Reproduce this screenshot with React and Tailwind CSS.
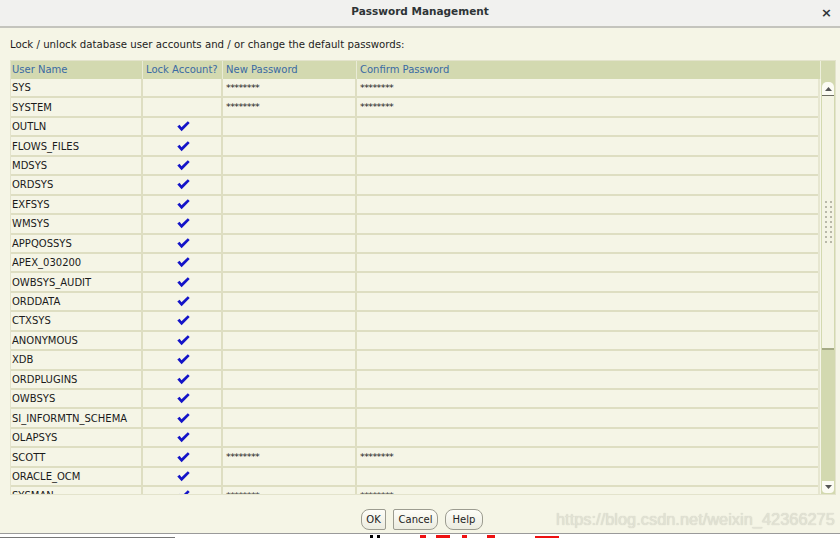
import React from "react";

// ─────────────────────────────────────────────
// DATA
// ─────────────────────────────────────────────
const PW = "********";
const rows = [
  { name: "SYS", lock: false, pw: true },
  { name: "SYSTEM", lock: false, pw: true },
  { name: "OUTLN", lock: true },
  { name: "FLOWS_FILES", lock: true },
  { name: "MDSYS", lock: true },
  { name: "ORDSYS", lock: true },
  { name: "EXFSYS", lock: true },
  { name: "WMSYS", lock: true },
  { name: "APPQOSSYS", lock: true },
  { name: "APEX_030200", lock: true },
  { name: "OWBSYS_AUDIT", lock: true },
  { name: "ORDDATA", lock: true },
  { name: "CTXSYS", lock: true },
  { name: "ANONYMOUS", lock: true },
  { name: "XDB", lock: true },
  { name: "ORDPLUGINS", lock: true },
  { name: "OWBSYS", lock: true },
  { name: "SI_INFORMTN_SCHEMA", lock: true },
  { name: "OLAPSYS", lock: true },
  { name: "SCOTT", lock: true, pw: true },
  { name: "ORACLE_OCM", lock: true },
  { name: "SYSMAN", lock: true, pw: true },
];

function Check() {
  return (
    <svg width="13" height="11" viewBox="0 0 13 11">
      <path d="M0.3 5.6 L2.6 3.8 L4.5 6.3 L10.8 0.3 L12.7 1.9 L4.6 10.2 Z" fill="#1414c8" />
    </svg>
  );
}

function Btn({ children, className = "" }) {
  return (
    <button
      className={`h-[21px] rounded-[8px] border border-[#9c9c90] bg-gradient-to-b from-[#fdfdf8] to-[#ecece0]
        text-[10px] text-[#222] leading-none ${className}`}
    >
      {children}
    </button>
  );
}

// ─────────────────────────────────────────────
// APP
// ─────────────────────────────────────────────
export default function App() {
  return (
    <div
      className="w-[840px] h-[538px] overflow-hidden flex flex-col bg-[#f5f5e6] text-[#1c1c1c]"
      style={{ fontFamily: '"DejaVu Sans", sans-serif' }}
    >
      {/* Title bar */}
      <div className="h-[28px] shrink-0 flex items-center bg-[#f1f1ef] border-b-2 border-[#c4c4bd] relative">
        <div className="flex-1 text-center text-[10.5px] font-bold text-[#2e3436] pb-[3px]">
          Password Management
        </div>
        <div className="absolute right-[8px] top-[3px] text-[13px] font-bold text-[#2e3436]">×</div>
      </div>

      {/* Body */}
      <div className="flex-1 flex flex-col px-[10px]">
        <div className="pt-[10px] h-[24px] text-[10.2px] leading-[14px] text-[#1c1c1c]">
          Lock / unlock database user accounts and / or change the default passwords:
        </div>

        {/* Table */}
        <div className="mt-[8px] w-[826px] h-[435px] border border-[#e3e3cc] flex flex-col">
          {/* Header */}
          <div className="h-[18px] shrink-0 flex bg-[#d3d9b0] text-[10px] text-[#3a6aa3]">
            <div className="flex-1 grid grid-cols-[132px_80px_134px_1fr]">
              <div className="pl-[1px] leading-[18px] border-r border-[#e9ebd6]">User Name</div>
              <div className="pl-[3px] leading-[18px] border-r border-[#e9ebd6]">Lock Account?</div>
              <div className="pl-[3px] leading-[18px] border-r border-[#e9ebd6]">New Password</div>
              <div className="pl-[3px] leading-[18px]">Confirm Password</div>
            </div>
            <div className="w-[15px] border-l border-[#eef0dd]" />
          </div>

          {/* Rows + scrollbar */}
          <div className="flex-1 flex min-h-0">
            <div className="flex-1 overflow-hidden border-r-2 border-[#e6e6d0]">
              {rows.map((r) => (
                <div
                  key={r.name}
                  className="h-[19.45px] grid grid-cols-[132px_80px_134px_1fr] border-b-2 border-[#dedec2] text-[10px]"
                >
                  <div className="pl-[1px] flex items-center border-r-2 border-[#dedec2] text-[#1a1a1a]">
                    {r.name}
                  </div>
                  <div className="flex items-center justify-center pl-[2px] border-r-2 border-[#dedec2]">
                    {r.lock && <Check />}
                  </div>
                  <div className="pl-[3px] flex items-center border-r-2 border-[#dedec2] text-[9.5px] tracking-[-0.6px]">
                    {r.pw ? PW : ""}
                  </div>
                  <div className="pl-[3px] flex items-center text-[9.5px] tracking-[-0.6px]">
                    {r.pw ? PW : ""}
                  </div>
                </div>
              ))}
            </div>

            {/* Scrollbar */}
            <div className="w-[15px] flex flex-col bg-[#d3d9b0] border-l border-[#f6f6ea]">
              <div className="h-[14px] mx-[1px] mt-[3px] rounded-t-[5px] bg-[#fbfbf3] border-b border-[#6b6b60] flex items-center justify-center">
                <svg width="7" height="4" viewBox="0 0 7 4"><path d="M0 4 L3.5 0 L7 4 Z" fill="#555" /></svg>
              </div>
              <div className="h-[254px] mx-[1px] bg-[#f4f4e4] border-b-2 border-[#a5aa86] flex flex-col items-center justify-center gap-[3px]">
                {Array.from({ length: 9 }).map((_, i) => (
                  <div key={i} className="flex gap-[3px]">
                    <span className="w-[2px] h-[2px] bg-[#b8b8a8]" />
                    <span className="w-[2px] h-[2px] bg-[#b8b8a8]" />
                  </div>
                ))}
              </div>
              <div className="flex-1" />
              <div className="h-[12px] mx-[1px] mb-[1px] rounded-b-[4px] bg-[#fbfbf3] flex items-center justify-center">
                <svg width="7" height="4" viewBox="0 0 7 4"><path d="M0 0 L7 0 L3.5 4 Z" fill="#555" /></svg>
              </div>
            </div>
          </div>
        </div>

        {/* Buttons */}
        <div className="flex-1 flex items-start pt-[14px]">
          <div className="flex ml-[351px] gap-[7px]">
            <Btn className="w-[25px] rounded-r-[2px]">OK</Btn>
            <Btn className="w-[45px] rounded-l-[2px]">Cancel</Btn>
            <Btn className="w-[38px]">Help</Btn>
          </div>
          <div
            className="ml-[73px] text-[16.4px] leading-[21px] text-[#e2e2d4]"
            style={{ fontFamily: '"Liberation Sans", Arial, sans-serif', textShadow: "0 0 1px #c8c8bc" }}
          >
            https://blog.csdn.net/weixin_42366275
          </div>
        </div>
      </div>

      {/* Underlying window strip */}
      <div className="h-[5px] shrink-0 bg-white border-t border-[#9a9a9a] flex items-end">
        <div className="w-[175px] h-[1px] bg-[#777]" />
        <div className="ml-[195px] w-[3px] h-[3px] bg-black" />
        <div className="ml-[4px] w-[3px] h-[3px] bg-black" />
        <div className="ml-[40px] w-[6px] h-[3px] bg-[#e11]" />
        <div className="ml-[10px] w-[14px] h-[3px] bg-[#e11]" />
        <div className="ml-[12px] w-[5px] h-[3px] bg-[#e11]" />
        <div className="ml-[20px] w-[8px] h-[3px] bg-[#e11]" />
        <div className="ml-[40px] w-[24px] h-[2px] bg-[#e11]" />
      </div>
    </div>
  );
}
